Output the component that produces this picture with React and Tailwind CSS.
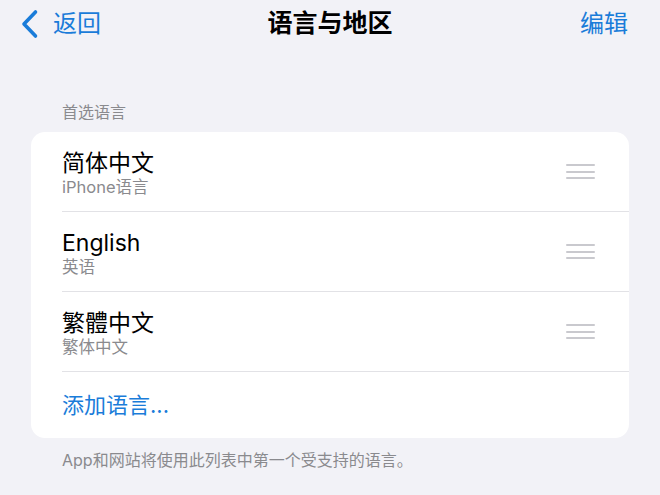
export default function App() {
  const font = { fontFamily: 'Inter, "Noto Sans CJK SC", sans-serif' };
  const rows = [
    { t: "简体中文", s: "iPhone语言" },
    { t: "English", s: "英语" },
    { t: "繁體中文", s: "繁体中文" },
  ];
  const Handle = () => (
    <div className="flex flex-col gap-[4.5px] w-[29px] mr-[34px]">
      <div className="h-[2px] bg-[#c9c9ce] rounded" />
      <div className="h-[2px] bg-[#c9c9ce] rounded" />
      <div className="h-[2px] bg-[#c9c9ce] rounded" />
    </div>
  );
  return (
    <div className="w-[660px] h-[495px] bg-[#f2f2f7] overflow-hidden" style={font}>
      <div className="relative h-[47px] flex items-center">
        <div className="flex items-center pl-[20px]">
          <svg width="19" height="30" viewBox="0 0 19 30" fill="none">
            <path d="M15.5 3 L4 15 L15.5 27" stroke="#1a7cd9" strokeWidth="3.6" strokeLinecap="round" strokeLinejoin="round" />
          </svg>
          <span className="ml-[14px] text-[24px] leading-none text-[#1a7cd9]">返回</span>
        </div>
        <div className="absolute left-0 right-0 top-0 h-[47px] flex items-center justify-center pointer-events-none">
          <span className="text-[25px] leading-none font-bold text-black">语言与地区</span>
        </div>
        <span className="ml-auto mr-[32px] text-[24px] leading-none text-[#1a7cd9]">编辑</span>
      </div>
      <div className="pt-[57px] pl-[62px] text-[16px] leading-none text-[#8a8a8e]">首选语言</div>
      <div className="mx-[31px] mt-[12px] bg-white rounded-[14px] overflow-hidden">
        {rows.map((r, i) => (
          <div key={i} className="h-[80px] ml-[31px] border-b border-[#e2e2e6] flex items-center">
            <div className="flex flex-col pt-[4px]">
              <span className="text-[23px] leading-[26px] text-black">{r.t}</span>
              <span className="text-[16.5px] leading-[22px] text-[#8a8a8e]">{r.s}</span>
            </div>
            <div className="ml-auto">
              <Handle />
            </div>
          </div>
        ))}
        <div className="h-[66px] ml-[31px] flex items-center">
          <span className="text-[22px] leading-none text-[#1a7cd9]">添加语言...</span>
        </div>
      </div>
      <div className="pl-[62px] pt-[12px] text-[16px] leading-[20px] text-[#8a8a8e]">
        App和网站将使用此列表中第一个受支持的语言。
      </div>
    </div>
  );
}
